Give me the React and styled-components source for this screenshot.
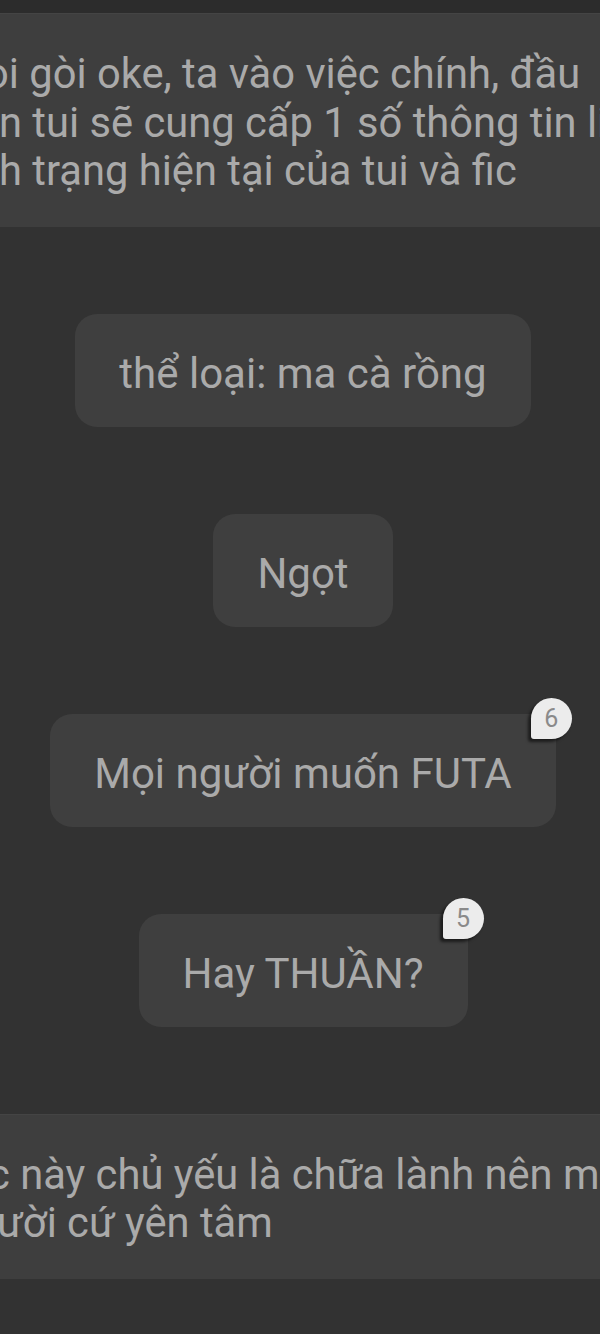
import React from "react";
import styled, { createGlobalStyle } from "styled-components";

const Global = createGlobalStyle`
  html, body { margin: 0; padding: 0; background: #323232; }
  body { font-family: Roboto, "Noto Sans", sans-serif; }
`;

const Page = styled.div`
  width: 600px;
  height: 1334px;
  background: #323232;
  overflow: hidden;
  display: flex;
  flex-direction: column;
  align-items: stretch;
`;

const TopStrip = styled.div`
  height: 13px;
  background: #2c2c2c;
`;

const Panel = styled.div`
  background: #3e3e3e;
  padding: 36px 0 31px;
  margin-top: ${(p) => p.$mt || 0}px;
  overflow: hidden;
  border-top: 1px solid #444;
`;

const Line = styled.div`
  white-space: nowrap;
  font-size: 41.7px;
  line-height: 48.5px;
  color: #aaaaaa;
  margin-left: ${(p) => p.$shift}px;
`;

const Stack = styled.div`
  display: flex;
  flex-direction: column;
  align-items: center;
  gap: 87px;
  padding: 87px 0 0 6px;
`;

const BubbleWrap = styled.div`
  position: relative;
`;

const Bubble = styled.div`
  background: #3f3f3f;
  border-radius: 22px;
  padding: 36px 44px 29px;
  font-size: 42px;
  line-height: 48px;
  color: #aaaaaa;
  white-space: nowrap;
`;

const Badge = styled.div`
  position: absolute;
  top: -16px;
  right: -16px;
  width: 41px;
  height: 41px;
  box-sizing: border-box;
  background: #ececec;
  border-radius: 21px 21px 21px 3px;
  box-shadow: -3px 3px 3px rgba(0, 0, 0, 0.55);
  display: flex;
  align-items: center;
  justify-content: center;
  font-size: 25px;
  color: #8a8a8a;
  font-family: Roboto, sans-serif;
`;

const bubbles = [
  { text: "thể loại: ma cà rồng" },
  { text: "Ngọt" },
  { text: "Mọi người muốn FUTA", badge: 6 },
  { text: "Hay THUẦN?", badge: 5 },
];

export default function App() {
  return (
    <Page>
      <Global />
      <TopStrip />
      <Panel>
        <Line $shift={-15}>oi gòi oke, ta vào việc chính, đầu</Line>
        <Line $shift={-1}>n tui sẽ cung cấp 1 số thông tin liên quan</Line>
        <Line $shift={-1}>h trạng hiện tại của tui và fic</Line>
      </Panel>
      <Stack>
        {bubbles.map((b) => (
          <BubbleWrap key={b.text}>
            <Bubble>{b.text}</Bubble>
            {b.badge && <Badge>{b.badge}</Badge>}
          </BubbleWrap>
        ))}
      </Stack>
      <Panel $mt={87}>
        <Line $shift={-12}>c này chủ yếu là chữa lành nên mọi</Line>
        <Line $shift={-3}>ười cứ yên tâm</Line>
      </Panel>
    </Page>
  );
}
